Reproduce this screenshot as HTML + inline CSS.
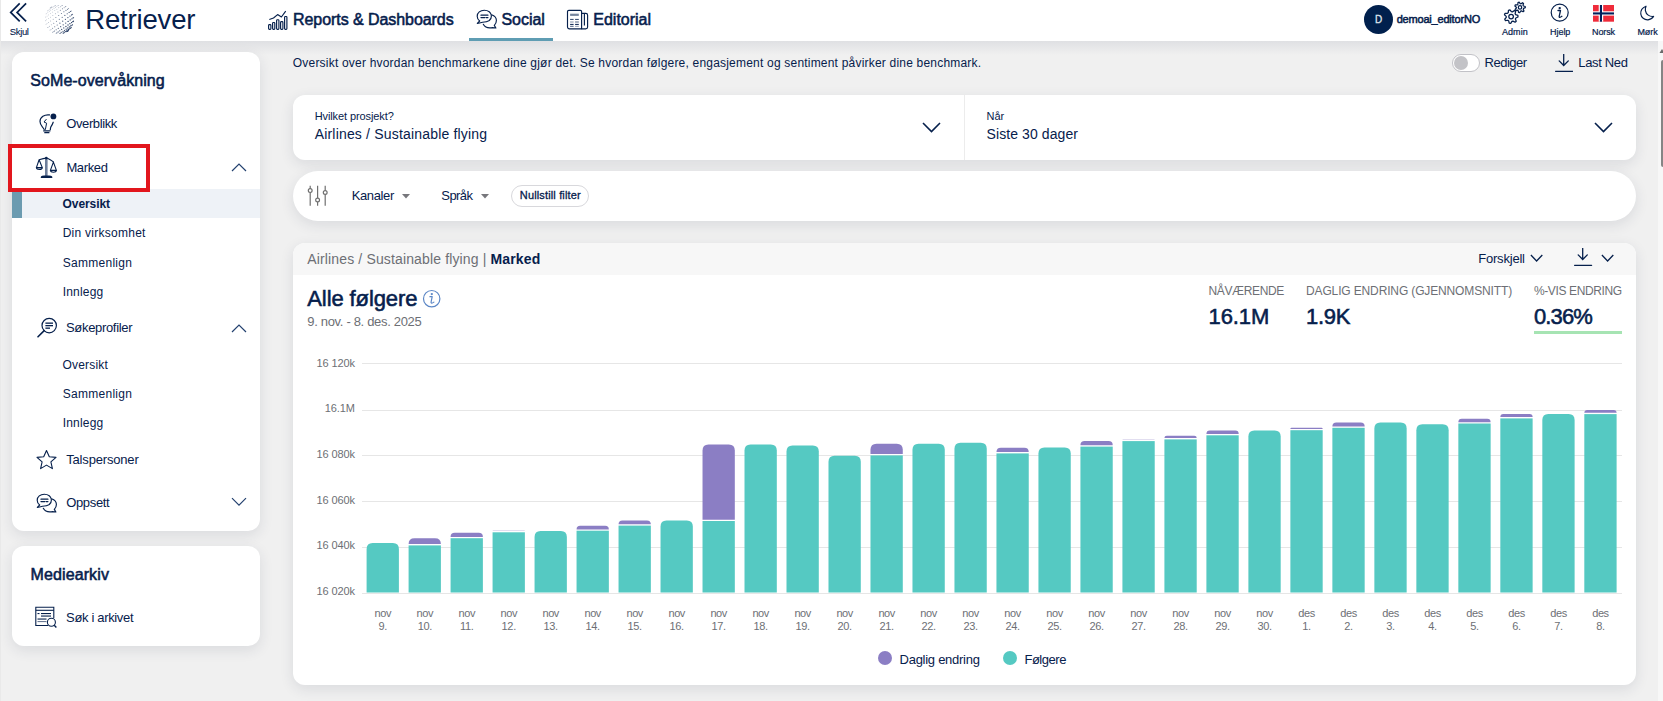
<!DOCTYPE html><html><head><meta charset="utf-8"><style>
html,body{margin:0;padding:0;width:1663px;height:701px;overflow:hidden;background:#f0f0f0;}
body{position:relative;font-family:"Liberation Sans",sans-serif;}
.t{position:absolute;white-space:nowrap;}
</style></head><body>
<div style="position:absolute;left:0px;top:41px;width:1663px;height:660px;background:#f0f0f0;"></div>
<div style="position:absolute;left:0px;top:41px;width:1px;height:660px;background:#e6e6e7;"></div>
<div style="position:absolute;left:0px;top:41px;width:1658px;height:14px;background:linear-gradient(#dfe0e3,#f0f0f0);"></div>
<div style="position:absolute;left:12px;top:52px;width:248px;height:479px;background:#fff;border-radius:12px;box-shadow:0 4px 14px rgba(35,45,75,0.11);"></div>
<div style="position:absolute;left:12px;top:546px;width:248px;height:100px;background:#fff;border-radius:12px;box-shadow:0 4px 14px rgba(35,45,75,0.11);"></div>
<div style="position:absolute;left:293px;top:95px;width:1343px;height:65px;background:#fff;border-radius:12px;box-shadow:0 4px 14px rgba(35,45,75,0.11);"></div>
<div style="position:absolute;left:293px;top:171px;width:1343px;height:50px;background:#fff;border-radius:25px;box-shadow:0 4px 14px rgba(35,45,75,0.11);"></div>
<div style="position:absolute;left:293px;top:243px;width:1343px;height:442px;background:#fff;border-radius:12px;box-shadow:0 4px 14px rgba(35,45,75,0.11);"></div>
<div style="position:absolute;left:0px;top:0px;width:1663px;height:41px;background:#fff;"></div>
<div style="position:absolute;left:0px;top:0px;width:1px;height:701px;background:#e9e9e9;"></div>
<svg style="position:absolute;left:8px;top:2px;" width="22" height="22" viewBox="0 0 22 22"><path d="M11.7 1.4 L2.7 10.4 L11.7 19.4 M18.1 1.4 L9.1 10.4 L18.1 19.4" fill="none" stroke="#06204c" stroke-width="1.7"/></svg>
<div class="t " style="left:9.80px;top:27.00px;font-size:9.5px;line-height:9.5px;color:#06204c;-webkit-text-stroke:0.1px #06204c;letter-spacing:-0.358px;">Skjul</div>
<svg style="position:absolute;left:45px;top:5px;" width="30" height="30" viewBox="0 0 30 30"><circle cx="5.03" cy="3.10" r="0.33" fill="#06204c" opacity="0.40"/><circle cx="5.32" cy="2.90" r="0.33" fill="#06204c" opacity="0.40"/><circle cx="5.64" cy="2.67" r="0.33" fill="#06204c" opacity="0.40"/><circle cx="5.99" cy="2.43" r="0.33" fill="#06204c" opacity="0.41"/><circle cx="6.33" cy="2.19" r="0.33" fill="#06204c" opacity="0.41"/><circle cx="6.66" cy="1.96" r="0.33" fill="#06204c" opacity="0.41"/><circle cx="6.94" cy="1.76" r="0.33" fill="#06204c" opacity="0.42"/><circle cx="2.35" cy="6.00" r="0.32" fill="#06204c" opacity="0.37"/><circle cx="2.71" cy="5.75" r="0.33" fill="#06204c" opacity="0.38"/><circle cx="3.30" cy="5.34" r="0.33" fill="#06204c" opacity="0.38"/><circle cx="4.06" cy="4.80" r="0.34" fill="#06204c" opacity="0.39"/><circle cx="4.97" cy="4.17" r="0.35" fill="#06204c" opacity="0.40"/><circle cx="5.96" cy="3.48" r="0.35" fill="#06204c" opacity="0.42"/><circle cx="6.98" cy="2.76" r="0.36" fill="#06204c" opacity="0.43"/><circle cx="7.97" cy="2.06" r="0.36" fill="#06204c" opacity="0.44"/><circle cx="8.88" cy="1.43" r="0.37" fill="#06204c" opacity="0.45"/><circle cx="9.64" cy="0.89" r="0.36" fill="#06204c" opacity="0.46"/><circle cx="10.23" cy="0.49" r="0.36" fill="#06204c" opacity="0.47"/><circle cx="10.59" cy="0.23" r="0.35" fill="#06204c" opacity="0.47"/><circle cx="1.06" cy="8.91" r="0.33" fill="#06204c" opacity="0.38"/><circle cx="1.82" cy="8.37" r="0.34" fill="#06204c" opacity="0.38"/><circle cx="2.90" cy="7.61" r="0.35" fill="#06204c" opacity="0.40"/><circle cx="4.25" cy="6.67" r="0.36" fill="#06204c" opacity="0.41"/><circle cx="5.78" cy="5.60" r="0.37" fill="#06204c" opacity="0.43"/><circle cx="7.41" cy="4.46" r="0.39" fill="#06204c" opacity="0.45"/><circle cx="9.03" cy="3.32" r="0.40" fill="#06204c" opacity="0.47"/><circle cx="10.57" cy="2.25" r="0.40" fill="#06204c" opacity="0.49"/><circle cx="11.91" cy="1.30" r="0.40" fill="#06204c" opacity="0.50"/><circle cx="13.00" cy="0.54" r="0.40" fill="#06204c" opacity="0.52"/><circle cx="13.76" cy="0.01" r="0.39" fill="#06204c" opacity="0.53"/><circle cx="0.06" cy="12.46" r="0.33" fill="#06204c" opacity="0.39"/><circle cx="0.82" cy="11.92" r="0.35" fill="#06204c" opacity="0.40"/><circle cx="2.05" cy="11.06" r="0.36" fill="#06204c" opacity="0.41"/><circle cx="3.66" cy="9.93" r="0.38" fill="#06204c" opacity="0.43"/><circle cx="5.57" cy="8.59" r="0.40" fill="#06204c" opacity="0.46"/><circle cx="7.67" cy="7.12" r="0.41" fill="#06204c" opacity="0.48"/><circle cx="9.83" cy="5.61" r="0.43" fill="#06204c" opacity="0.51"/><circle cx="11.92" cy="4.15" r="0.44" fill="#06204c" opacity="0.53"/><circle cx="13.83" cy="2.81" r="0.45" fill="#06204c" opacity="0.55"/><circle cx="15.45" cy="1.68" r="0.45" fill="#06204c" opacity="0.57"/><circle cx="16.67" cy="0.82" r="0.43" fill="#06204c" opacity="0.59"/><circle cx="17.44" cy="0.28" r="0.41" fill="#06204c" opacity="0.60"/><circle cx="-0.10" cy="16.10" r="0.34" fill="#06204c" opacity="0.42"/><circle cx="0.51" cy="15.68" r="0.36" fill="#06204c" opacity="0.43"/><circle cx="1.69" cy="14.84" r="0.38" fill="#06204c" opacity="0.44"/><circle cx="3.39" cy="13.66" r="0.40" fill="#06204c" opacity="0.46"/><circle cx="5.49" cy="12.19" r="0.42" fill="#06204c" opacity="0.49"/><circle cx="7.87" cy="10.52" r="0.44" fill="#06204c" opacity="0.51"/><circle cx="10.41" cy="8.74" r="0.47" fill="#06204c" opacity="0.54"/><circle cx="12.94" cy="6.97" r="0.48" fill="#06204c" opacity="0.57"/><circle cx="15.33" cy="5.30" r="0.50" fill="#06204c" opacity="0.60"/><circle cx="17.43" cy="3.83" r="0.50" fill="#06204c" opacity="0.63"/><circle cx="19.12" cy="2.64" r="0.49" fill="#06204c" opacity="0.65"/><circle cx="20.31" cy="1.81" r="0.46" fill="#06204c" opacity="0.66"/><circle cx="20.92" cy="1.38" r="0.41" fill="#06204c" opacity="0.67"/><circle cx="1.02" cy="19.33" r="0.37" fill="#06204c" opacity="0.47"/><circle cx="2.01" cy="18.64" r="0.39" fill="#06204c" opacity="0.48"/><circle cx="3.60" cy="17.52" r="0.42" fill="#06204c" opacity="0.50"/><circle cx="5.70" cy="16.06" r="0.45" fill="#06204c" opacity="0.53"/><circle cx="8.18" cy="14.32" r="0.48" fill="#06204c" opacity="0.56"/><circle cx="10.90" cy="12.42" r="0.50" fill="#06204c" opacity="0.59"/><circle cx="13.70" cy="10.46" r="0.53" fill="#06204c" opacity="0.62"/><circle cx="16.41" cy="8.55" r="0.54" fill="#06204c" opacity="0.65"/><circle cx="18.89" cy="6.82" r="0.55" fill="#06204c" opacity="0.68"/><circle cx="20.99" cy="5.35" r="0.54" fill="#06204c" opacity="0.71"/><circle cx="22.58" cy="4.24" r="0.52" fill="#06204c" opacity="0.73"/><circle cx="23.57" cy="3.54" r="0.47" fill="#06204c" opacity="0.74"/><circle cx="2.43" cy="22.61" r="0.37" fill="#06204c" opacity="0.53"/><circle cx="3.12" cy="22.13" r="0.41" fill="#06204c" opacity="0.53"/><circle cx="4.46" cy="21.19" r="0.44" fill="#06204c" opacity="0.55"/><circle cx="6.37" cy="19.85" r="0.47" fill="#06204c" opacity="0.57"/><circle cx="8.74" cy="18.19" r="0.50" fill="#06204c" opacity="0.60"/><circle cx="11.44" cy="16.30" r="0.53" fill="#06204c" opacity="0.63"/><circle cx="14.30" cy="14.30" r="0.56" fill="#06204c" opacity="0.67"/><circle cx="17.16" cy="12.30" r="0.58" fill="#06204c" opacity="0.70"/><circle cx="19.86" cy="10.41" r="0.59" fill="#06204c" opacity="0.73"/><circle cx="22.23" cy="8.75" r="0.59" fill="#06204c" opacity="0.76"/><circle cx="24.14" cy="7.41" r="0.58" fill="#06204c" opacity="0.78"/><circle cx="25.48" cy="6.47" r="0.54" fill="#06204c" opacity="0.80"/><circle cx="26.17" cy="5.99" r="0.46" fill="#06204c" opacity="0.81"/><circle cx="5.03" cy="25.06" r="0.42" fill="#06204c" opacity="0.60"/><circle cx="6.02" cy="24.36" r="0.46" fill="#06204c" opacity="0.61"/><circle cx="7.61" cy="23.25" r="0.50" fill="#06204c" opacity="0.63"/><circle cx="9.71" cy="21.78" r="0.53" fill="#06204c" opacity="0.65"/><circle cx="12.19" cy="20.05" r="0.56" fill="#06204c" opacity="0.68"/><circle cx="14.90" cy="18.14" r="0.59" fill="#06204c" opacity="0.71"/><circle cx="17.70" cy="16.18" r="0.61" fill="#06204c" opacity="0.75"/><circle cx="20.42" cy="14.28" r="0.63" fill="#06204c" opacity="0.78"/><circle cx="22.90" cy="12.54" r="0.63" fill="#06204c" opacity="0.81"/><circle cx="25.00" cy="11.08" r="0.62" fill="#06204c" opacity="0.83"/><circle cx="26.59" cy="9.96" r="0.59" fill="#06204c" opacity="0.85"/><circle cx="27.58" cy="9.27" r="0.52" fill="#06204c" opacity="0.86"/><circle cx="7.68" cy="27.22" r="0.41" fill="#06204c" opacity="0.66"/><circle cx="8.29" cy="26.79" r="0.47" fill="#06204c" opacity="0.67"/><circle cx="9.48" cy="25.96" r="0.51" fill="#06204c" opacity="0.69"/><circle cx="11.17" cy="24.77" r="0.55" fill="#06204c" opacity="0.71"/><circle cx="13.27" cy="23.30" r="0.58" fill="#06204c" opacity="0.73"/><circle cx="15.66" cy="21.63" r="0.61" fill="#06204c" opacity="0.76"/><circle cx="18.19" cy="19.86" r="0.63" fill="#06204c" opacity="0.79"/><circle cx="20.73" cy="18.08" r="0.65" fill="#06204c" opacity="0.82"/><circle cx="23.11" cy="16.41" r="0.65" fill="#06204c" opacity="0.85"/><circle cx="25.21" cy="14.94" r="0.65" fill="#06204c" opacity="0.87"/><circle cx="26.91" cy="13.76" r="0.62" fill="#06204c" opacity="0.89"/><circle cx="28.09" cy="12.92" r="0.57" fill="#06204c" opacity="0.91"/><circle cx="28.70" cy="12.50" r="0.48" fill="#06204c" opacity="0.91"/><circle cx="11.16" cy="28.32" r="0.46" fill="#06204c" opacity="0.74"/><circle cx="11.93" cy="27.78" r="0.51" fill="#06204c" opacity="0.75"/><circle cx="13.15" cy="26.92" r="0.55" fill="#06204c" opacity="0.76"/><circle cx="14.77" cy="25.79" r="0.58" fill="#06204c" opacity="0.78"/><circle cx="16.68" cy="24.45" r="0.61" fill="#06204c" opacity="0.80"/><circle cx="18.77" cy="22.99" r="0.63" fill="#06204c" opacity="0.83"/><circle cx="20.93" cy="21.48" r="0.65" fill="#06204c" opacity="0.85"/><circle cx="23.03" cy="20.01" r="0.66" fill="#06204c" opacity="0.88"/><circle cx="24.94" cy="18.67" r="0.65" fill="#06204c" opacity="0.90"/><circle cx="26.55" cy="17.54" r="0.63" fill="#06204c" opacity="0.92"/><circle cx="27.78" cy="16.68" r="0.60" fill="#06204c" opacity="0.93"/><circle cx="28.54" cy="16.14" r="0.53" fill="#06204c" opacity="0.94"/><circle cx="14.84" cy="28.59" r="0.49" fill="#06204c" opacity="0.81"/><circle cx="15.60" cy="28.06" r="0.53" fill="#06204c" opacity="0.82"/><circle cx="16.69" cy="27.30" r="0.57" fill="#06204c" opacity="0.83"/><circle cx="18.03" cy="26.35" r="0.60" fill="#06204c" opacity="0.84"/><circle cx="19.57" cy="25.28" r="0.62" fill="#06204c" opacity="0.86"/><circle cx="21.19" cy="24.14" r="0.63" fill="#06204c" opacity="0.88"/><circle cx="22.82" cy="23.00" r="0.64" fill="#06204c" opacity="0.90"/><circle cx="24.35" cy="21.93" r="0.64" fill="#06204c" opacity="0.92"/><circle cx="25.70" cy="20.99" r="0.62" fill="#06204c" opacity="0.94"/><circle cx="26.78" cy="20.23" r="0.59" fill="#06204c" opacity="0.95"/><circle cx="27.54" cy="19.69" r="0.55" fill="#06204c" opacity="0.96"/><circle cx="18.01" cy="28.37" r="0.45" fill="#06204c" opacity="0.86"/><circle cx="18.37" cy="28.11" r="0.50" fill="#06204c" opacity="0.87"/><circle cx="18.96" cy="27.71" r="0.53" fill="#06204c" opacity="0.87"/><circle cx="19.72" cy="27.17" r="0.55" fill="#06204c" opacity="0.88"/><circle cx="20.63" cy="26.54" r="0.57" fill="#06204c" opacity="0.89"/><circle cx="21.62" cy="25.84" r="0.58" fill="#06204c" opacity="0.91"/><circle cx="22.64" cy="25.12" r="0.59" fill="#06204c" opacity="0.92"/><circle cx="23.63" cy="24.43" r="0.59" fill="#06204c" opacity="0.93"/><circle cx="24.54" cy="23.80" r="0.58" fill="#06204c" opacity="0.94"/><circle cx="25.30" cy="23.26" r="0.56" fill="#06204c" opacity="0.95"/><circle cx="25.89" cy="22.85" r="0.53" fill="#06204c" opacity="0.96"/><circle cx="26.25" cy="22.60" r="0.48" fill="#06204c" opacity="0.96"/><circle cx="21.66" cy="26.84" r="0.47" fill="#06204c" opacity="0.92"/><circle cx="21.94" cy="26.64" r="0.48" fill="#06204c" opacity="0.92"/><circle cx="22.27" cy="26.41" r="0.49" fill="#06204c" opacity="0.92"/><circle cx="22.61" cy="26.17" r="0.49" fill="#06204c" opacity="0.93"/><circle cx="22.96" cy="25.93" r="0.49" fill="#06204c" opacity="0.93"/><circle cx="23.28" cy="25.70" r="0.49" fill="#06204c" opacity="0.93"/><circle cx="23.57" cy="25.50" r="0.47" fill="#06204c" opacity="0.94"/></svg>
<div class="t " style="left:85.30px;top:6.00px;font-size:27.5px;line-height:27.5px;color:#06204c;letter-spacing:-0.174px;">Retriever</div>
<svg style="position:absolute;left:267px;top:10px;" width="22" height="21" viewBox="0 0 22 21"><g fill="none" stroke="#06204c" stroke-width="1.15" stroke-linejoin="round"><path d="M2.3 9.5 L6.5 8 L10.6 4.6 L14.4 7 L18.7 1.2"/><rect x="1.6" y="14.6" width="2.3" height="4.7" rx="0.8"/><rect x="5.6" y="12.5" width="2.2" height="6.8" rx="0.8"/><rect x="9.6" y="9.7" width="2.3" height="9.6" rx="0.8"/><rect x="13.6" y="11.6" width="2.3" height="7.7" rx="0.8"/><rect x="17.6" y="6.5" width="2.3" height="12.8" rx="0.8"/></g></svg>
<div class="t " style="left:293.00px;top:12.00px;font-size:16px;line-height:16px;color:#06204c;-webkit-text-stroke:0.55px #06204c;letter-spacing:-0.063px;">Reports &amp; Dashboards</div>
<svg style="position:absolute;left:476px;top:9px;" width="22" height="21" viewBox="0 0 22 21"><g fill="none" stroke="#06204c" stroke-width="1.15" stroke-linejoin="round" stroke-linecap="round"><path d="M6.5 13.2 C10.5 13.2 15.4 11.8 15.4 7 C15.4 3.2 12 1.2 8.3 1.2 C4.3 1.2 1.2 3.6 1.2 7.2 C1.2 9.2 2.2 10.9 3.7 12 L1.3 14.4 C3 14.3 4.8 13.8 6.5 13.2 Z"/><path d="M15.6 5.8 C18.5 6.8 20.4 9 20.4 11.6 C20.4 13.6 19.6 15.1 18.3 16.4 L19.9 19 C18.7 19 17.5 18.8 16.4 18.6 C15.6 18.8 14.7 18.9 13.8 18.9 C10.8 18.9 8.5 17.5 7.3 15.3"/><path d="M5 6.2 H11.9 M5 8.6 H8.8 M10.2 8.6 H11.9" stroke-width="1.3"/></g></svg>
<div class="t " style="left:501.50px;top:12.00px;font-size:16px;line-height:16px;color:#06204c;-webkit-text-stroke:0.55px #06204c;letter-spacing:-0.047px;">Social</div>
<div style="position:absolute;left:469px;top:38px;width:84px;height:3px;background:#5f9db3;"></div>
<svg style="position:absolute;left:566px;top:9px;" width="23" height="22" viewBox="0 0 23 22"><g fill="none" stroke="#06204c" stroke-width="1.15" stroke-linejoin="round"><path d="M15.6 19.9 H3.5 C2.3 19.9 1.5 19 1.5 17.8 V2.6 C1.5 1.8 2 1.3 2.8 1.3 H14.4 C15.1 1.3 15.6 1.8 15.6 2.6 Z"/><path d="M15.6 4.4 H19.8 C20.8 4.4 21.6 5.2 21.6 6.2 V18 C21.6 19.1 20.8 19.9 19.7 19.9 H15.6"/><path d="M18.4 4.9 V16.5"/></g><g fill="#06204c"><rect x="4.1" y="4.7" width="8.7" height="2.2" opacity="0.55"/><rect x="4.1" y="9.9" width="3.5" height="1" opacity="0.85"/><rect x="9.1" y="9.9" width="3.7" height="1" opacity="0.85"/><rect x="4.1" y="12.5" width="3.5" height="1" opacity="0.5"/><rect x="9.1" y="12.5" width="3.7" height="1" opacity="0.7"/><rect x="4.1" y="14.9" width="3.5" height="1" opacity="1"/><rect x="9.1" y="14.9" width="3.7" height="1" opacity="1"/><rect x="4.1" y="16.8" width="3.5" height="1" opacity="0.7"/><rect x="9.1" y="16.8" width="3.7" height="1" opacity="0.45"/></g></svg>
<div class="t " style="left:593.30px;top:12.00px;font-size:16px;line-height:16px;color:#06204c;-webkit-text-stroke:0.55px #06204c;letter-spacing:-0.012px;">Editorial</div>
<div style="position:absolute;left:1363.9px;top:4.9px;width:29px;height:29px;border-radius:50%;background:#00204d;"></div>
<div class="t " style="left:1374.90px;top:15.00px;font-size:10px;line-height:10px;color:#dfe4ec;-webkit-text-stroke:0.3px #dfe4ec;letter-spacing:-0.222px;">D</div>
<div class="t " style="left:1396.70px;top:14.00px;font-size:11px;line-height:11px;color:#06204c;-webkit-text-stroke:0.5px #06204c;letter-spacing:-0.194px;">demoai_editorNO</div>
<svg style="position:absolute;left:1502px;top:1px;" width="26" height="24" viewBox="0 0 26 24"><path d="M15.90 14.44 L15.99 15.99 L13.81 16.96 L13.39 17.97 L14.24 20.20 L13.09 21.23 L10.98 20.13 L9.92 20.43 L8.71 22.49 L7.19 22.23 L6.73 19.89 L5.83 19.25 L3.47 19.59 L2.73 18.24 L4.27 16.42 L4.21 15.33 L2.47 13.69 L3.06 12.26 L5.45 12.33 L6.26 11.60 L6.46 9.23 L7.94 8.80 L9.37 10.71 L10.46 10.89 L12.44 9.56 L13.70 10.46 L13.10 12.76 L13.63 13.72Z" fill="none" stroke="#06204c" stroke-width="1.25" stroke-linejoin="round"/><circle cx="9.1" cy="15.6" r="2.3" fill="none" stroke="#06204c" stroke-width="1.25"/><path d="M23.23 5.51 L23.29 6.70 L21.56 7.42 L21.24 8.19 L21.95 9.93 L21.07 10.72 L19.42 9.82 L18.62 10.05 L17.70 11.69 L16.53 11.49 L16.21 9.64 L15.53 9.16 L13.68 9.47 L13.10 8.43 L14.35 7.02 L14.31 6.19 L12.91 4.93 L13.36 3.84 L15.24 3.93 L15.86 3.38 L15.97 1.50 L17.11 1.17 L18.21 2.71 L19.02 2.84 L20.56 1.76 L21.53 2.45 L21.02 4.26 L21.42 4.98Z" fill="none" stroke="#06204c" stroke-width="1.25" stroke-linejoin="round"/><circle cx="18" cy="6.4" r="1.7" fill="none" stroke="#06204c" stroke-width="1.25"/></svg>
<div class="t " style="left:1502.00px;top:28.00px;font-size:9px;line-height:9px;color:#06204c;-webkit-text-stroke:0.2px #06204c;letter-spacing:0.058px;">Admin</div>
<svg style="position:absolute;left:1550px;top:3px;" width="20" height="20" viewBox="0 0 20 20"><circle cx="9.7" cy="9.6" r="8.5" fill="none" stroke="#06204c" stroke-width="1.2"/><circle cx="9.7" cy="5.1" r="1.2" fill="#06204c"/><path d="M8 7.5 H10.5 L9.2 13.3 C9 14.6 10.2 14.7 11.9 13.3" fill="none" stroke="#06204c" stroke-width="1.3" stroke-linecap="round" stroke-linejoin="round"/></svg>
<div class="t " style="left:1550.00px;top:28.00px;font-size:9px;line-height:9px;color:#06204c;-webkit-text-stroke:0.2px #06204c;letter-spacing:-0.042px;">Hjelp</div>
<svg style="position:absolute;left:1593px;top:5.1px;" width="21" height="16.7" viewBox="0 0 21 16.7"><rect width="21" height="16.7" fill="#ef2b3a"/><rect x="5.7" width="4.5" height="16.7" fill="#fff"/><rect y="6.3" width="21" height="4.3" fill="#fff"/><rect x="6.9" width="2.1" height="16.7" fill="#00205b"/><rect y="7.4" width="21" height="2.1" fill="#00205b"/></svg>
<div class="t " style="left:1592.00px;top:28.00px;font-size:9px;line-height:9px;color:#06204c;-webkit-text-stroke:0.2px #06204c;letter-spacing:-0.101px;">Norsk</div>
<svg style="position:absolute;left:1639px;top:5px;" width="17" height="16" viewBox="0 0 17 16"><path d="M7 1.2 C3.5 2.5 1.5 5.5 1.8 9 C2.2 12.6 5.3 15 9 14.8 C11.5 14.6 13.4 13.3 14.6 11.4 C10.5 12 7 9.3 6.4 5.6 C6.2 4 6.4 2.5 7 1.2 Z" fill="none" stroke="#06204c" stroke-width="1.2" stroke-linejoin="round"/></svg>
<div class="t " style="left:1637.40px;top:28.00px;font-size:9px;line-height:9px;color:#06204c;-webkit-text-stroke:0.2px #06204c;letter-spacing:-0.073px;">Mørk</div>
<div style="position:absolute;left:1658px;top:41px;width:5px;height:660px;background:#f7f7f7;"></div>
<div style="position:absolute;left:1661px;top:60px;width:4px;height:107px;background:#858585;border-radius:2px;"></div>
<svg style="position:absolute;left:1659px;top:48px;" width="6" height="6" viewBox="0 0 6 6"><path d="M0.5 5 L3 1 L5.5 5 Z" fill="#6a6a6a"/></svg>
<div class="t " style="left:30.30px;top:73.00px;font-size:16px;line-height:16px;color:#06204c;-webkit-text-stroke:0.55px #06204c;letter-spacing:0.062px;">SoMe-overvåkning</div>
<svg style="position:absolute;left:38px;top:112px;" width="21" height="23" viewBox="0 0 21 23"><g fill="none" stroke="#06204c" stroke-width="1.2" stroke-linecap="round"><path d="M11.5 2.9 C6.5 2.2 2 5.2 2 9.5 C2 12.3 3.6 14 4.8 15.5 C5.6 16.5 6 17 6.2 17.6"/><path d="M15.2 10.2 C14.6 12 13.8 13.3 13 14.6 C12.6 15.4 12.4 16.4 12.3 17.6"/><path d="M8.2 7.4 L6 10 L8.6 11.2 L7.4 17.4" stroke-width="1"/></g><g fill="#06204c"><rect x="5.1" y="18.2" width="7.4" height="1.3" rx="0.5"/><rect x="6.2" y="19.9" width="5.3" height="1.3" rx="0.5"/></g><circle cx="15.4" cy="4.4" r="2.9" fill="#06204c"/></svg>
<div class="t " style="left:66.20px;top:117.00px;font-size:13px;line-height:13px;color:#06204c;letter-spacing:-0.375px;">Overblikk</div>
<div style="position:absolute;left:12px;top:189px;width:248px;height:29px;background:#eef2f7;"></div>
<div style="position:absolute;left:12px;top:189px;width:10px;height:29px;background:#6b9bb0;"></div>
<svg style="position:absolute;left:35px;top:156px;" width="23" height="23" viewBox="0 0 23 23"><g fill="none" stroke="#06204c" stroke-width="1.1" stroke-linejoin="round"><path d="M4.1 3.7 C7 2.7 9.5 2.1 11.3 2.1 C13.5 2.2 16.3 4.4 18.6 6"/><path d="M4.1 3.8 L1.4 11.6 H7.3 Z M18.4 6.1 L15.4 14.4 H21.4 Z"/><path d="M1.4 11.6 C1.8 14 7 14 7.3 11.6 M15.4 14.4 C15.8 16.8 21 16.8 21.4 14.4"/></g><path d="M10 2.6 H12.6 V20 H10 Z" fill="#6f7f9a"/><circle cx="11.3" cy="2.1" r="1.3" fill="#06204c"/><path d="M5.8 20.9 C5.8 19.9 7.8 19.6 11.5 19.6 C15.2 19.6 17.3 19.9 17.3 20.9 V22 H5.8 Z" fill="#06204c"/></svg>
<div class="t " style="left:66.40px;top:161.00px;font-size:13px;line-height:13px;color:#06204c;letter-spacing:-0.358px;">Marked</div>
<svg style="position:absolute;left:231px;top:163px;" width="16" height="10" viewBox="0 0 16 10"><path d="M1 8 L8 1 L15 8" fill="none" stroke="#23416f" stroke-width="1.2"/></svg>
<div class="t " style="left:62.50px;top:198.00px;font-size:12px;line-height:12px;color:#06204c;font-weight:700;letter-spacing:-0.066px;">Oversikt</div>
<div class="t " style="left:62.70px;top:227.00px;font-size:12px;line-height:12px;color:#06204c;letter-spacing:0.260px;">Din virksomhet</div>
<div class="t " style="left:62.70px;top:257.00px;font-size:12px;line-height:12px;color:#06204c;letter-spacing:0.280px;">Sammenlign</div>
<div class="t " style="left:62.70px;top:286.00px;font-size:12px;line-height:12px;color:#06204c;letter-spacing:0.204px;">Innlegg</div>
<svg style="position:absolute;left:36.8px;top:317.2px;" width="22" height="21" viewBox="0 0 22 21"><g fill="none" stroke="#06204c" stroke-width="1.2"><circle cx="12.2" cy="8.6" r="7.2"/><path d="M7.2 13.6 L1 19.8" stroke-width="1.6" stroke-linecap="round"/></g><g fill="#06204c"><rect x="8.4" y="5.5" width="7.6" height="1.3"/><rect x="8.4" y="8" width="7.6" height="1.3"/><rect x="8.4" y="10.5" width="4.6" height="1.3"/></g></svg>
<div class="t " style="left:66.00px;top:321.00px;font-size:13px;line-height:13px;color:#06204c;letter-spacing:-0.323px;">Søkeprofiler</div>
<svg style="position:absolute;left:231px;top:323.8px;" width="16" height="10" viewBox="0 0 16 10"><path d="M1 8 L8 1 L15 8" fill="none" stroke="#23416f" stroke-width="1.2"/></svg>
<div class="t " style="left:62.50px;top:359.00px;font-size:12px;line-height:12px;color:#06204c;letter-spacing:0.187px;">Oversikt</div>
<div class="t " style="left:62.70px;top:388.00px;font-size:12px;line-height:12px;color:#06204c;letter-spacing:0.280px;">Sammenlign</div>
<div class="t " style="left:62.70px;top:417.00px;font-size:12px;line-height:12px;color:#06204c;letter-spacing:0.204px;">Innlegg</div>
<svg style="position:absolute;left:35px;top:449px;" width="23" height="22" viewBox="0 0 23 22"><path d="M11.5 1.6 L14.3 7.8 L21 8.4 L15.9 12.9 L17.4 19.6 L11.5 16.1 L5.6 19.6 L7.1 12.9 L2 8.4 L8.7 7.8 Z" fill="none" stroke="#06204c" stroke-width="1.1" stroke-linejoin="round"/></svg>
<div class="t " style="left:66.20px;top:453.00px;font-size:13px;line-height:13px;color:#06204c;letter-spacing:-0.169px;">Talspersoner</div>
<svg style="position:absolute;left:35.8px;top:492.8px;" width="23" height="21" viewBox="0 0 23 21"><g fill="none" stroke="#06204c" stroke-width="1.15" stroke-linejoin="round" stroke-linecap="round"><path d="M6.5 13.2 C10.5 13.2 15.4 11.8 15.4 7 C15.4 3.2 12 1.2 8.3 1.2 C4.3 1.2 1.2 3.6 1.2 7.2 C1.2 9.2 2.2 10.9 3.7 12 L1.3 14.4 C3 14.3 4.8 13.8 6.5 13.2 Z"/><path d="M15.6 5.8 C18.5 6.8 20.4 9 20.4 11.6 C20.4 13.6 19.6 15.1 18.3 16.4 L19.9 19 C18.7 19 17.5 18.8 16.4 18.6 C15.6 18.8 14.7 18.9 13.8 18.9 C10.8 18.9 8.5 17.5 7.3 15.3"/><path d="M5 6.2 H11.9 M5 8.6 H8.8 M10.2 8.6 H11.9" stroke-width="1.3"/></g></svg>
<div class="t " style="left:66.20px;top:496.00px;font-size:13px;line-height:13px;color:#06204c;letter-spacing:-0.332px;">Oppsett</div>
<svg style="position:absolute;left:231px;top:497px;" width="16" height="10" viewBox="0 0 16 10"><path d="M1 1.2 L8 8.2 L15 1.2" fill="none" stroke="#23416f" stroke-width="1.2"/></svg>
<div class="t " style="left:30.50px;top:567.00px;font-size:16px;line-height:16px;color:#06204c;-webkit-text-stroke:0.55px #06204c;letter-spacing:0.114px;">Mediearkiv</div>
<svg style="position:absolute;left:34px;top:606px;" width="24" height="23" viewBox="0 0 24 23"><g fill="none" stroke="#06204c" stroke-width="1.1"><path d="M14 19.5 H1.8 V1.3 H19.8 V12"/><path d="M1.8 4.3 H19.8"/><circle cx="17.4" cy="16.3" r="4"/><path d="M20.2 19.3 L22.4 21.6" stroke-width="1.4"/></g><g fill="#06204c"><rect x="7" y="7" width="10" height="1.1"/><rect x="7" y="9.5" width="10" height="1.1"/><rect x="3.5" y="7" width="2" height="1.1"/><rect x="3.5" y="12.5" width="9" height="1.1"/><rect x="3.5" y="15" width="9" height="1.1" opacity="0.6"/></g></svg>
<div class="t " style="left:66.10px;top:611.00px;font-size:13px;line-height:13px;color:#06204c;letter-spacing:-0.340px;">Søk i arkivet</div>
<div style="position:absolute;left:8px;top:144.4px;width:142px;height:47.6px;border:4px solid #e2161d;box-sizing:border-box;"></div>
<div class="t " style="left:292.80px;top:57.00px;font-size:12px;line-height:12px;color:#06204c;letter-spacing:0.203px;">Oversikt over hvordan benchmarkene dine gjør det. Se hvordan følgere, engasjement og sentiment påvirker dine benchmark.</div>
<div style="position:absolute;left:1452px;top:54px;width:28.3px;height:17.6px;border-radius:9px;background:#fff;border:1px solid #c2c2c7;box-sizing:border-box;"></div>
<div style="position:absolute;left:1453.6px;top:55.8px;width:14px;height:14px;border-radius:50%;background:#c3c3c7;"></div>
<div class="t " style="left:1484.50px;top:56.00px;font-size:13px;line-height:13px;color:#06204c;letter-spacing:-0.490px;">Rediger</div>
<svg style="position:absolute;left:1555px;top:54px;" width="18" height="18" viewBox="0 0 18 18"><g fill="none" stroke="#06204c" stroke-width="1.3" stroke-linecap="round"><path d="M8.7 0.3 V11.4 M4.2 6.9 L8.7 11.5 L13.3 6.9"/><path d="M0.6 17.3 H17.6"/></g></svg>
<div class="t " style="left:1578.30px;top:56.00px;font-size:13px;line-height:13px;color:#06204c;letter-spacing:-0.342px;">Last Ned</div>
<div style="position:absolute;left:964px;top:95px;width:1px;height:65px;background:#ececec;"></div>
<div class="t " style="left:314.70px;top:111.00px;font-size:11px;line-height:11px;color:#06204c;letter-spacing:-0.100px;">Hvilket prosjekt?</div>
<div class="t " style="left:314.70px;top:127.00px;font-size:14px;line-height:14px;color:#06204c;letter-spacing:0.182px;">Airlines / Sustainable flying</div>
<svg style="position:absolute;left:922px;top:122px;" width="19" height="11" viewBox="0 0 19 11"><path d="M1 1 L9.5 9.5 L18 1" fill="none" stroke="#06204c" stroke-width="1.6"/></svg>
<div class="t " style="left:986.60px;top:111.00px;font-size:11px;line-height:11px;color:#06204c;letter-spacing:-0.075px;">Når</div>
<div class="t " style="left:986.60px;top:127.00px;font-size:14px;line-height:14px;color:#06204c;letter-spacing:0.080px;">Siste 30 dager</div>
<svg style="position:absolute;left:1594px;top:122px;" width="19" height="11" viewBox="0 0 19 11"><path d="M1 1 L9.5 9.5 L18 1" fill="none" stroke="#06204c" stroke-width="1.6"/></svg>
<svg style="position:absolute;left:307px;top:185px;" width="22" height="22" viewBox="0 0 22 22"><g stroke="#707070" stroke-width="1.2" fill="none"><path d="M3.2 0.8 V20.7 M10.6 0.8 V20.7 M18.2 0.8 V20.7"/><circle cx="3.2" cy="5.6" r="1.9" fill="#fff"/><circle cx="10.6" cy="15" r="1.9" fill="#fff"/><circle cx="18.2" cy="7.5" r="1.9" fill="#fff"/></g></svg>
<div class="t " style="left:351.70px;top:189.00px;font-size:13px;line-height:13px;color:#06204c;letter-spacing:-0.373px;">Kanaler</div>
<svg style="position:absolute;left:401.5px;top:193.5px;" width="8" height="5" viewBox="0 0 8 5"><path d="M0 0 H8 L4 4.6 Z" fill="#77777c"/></svg>
<div class="t " style="left:441.30px;top:189.00px;font-size:13px;line-height:13px;color:#06204c;letter-spacing:-0.552px;">Språk</div>
<svg style="position:absolute;left:480.5px;top:193.5px;" width="8" height="5" viewBox="0 0 8 5"><path d="M0 0 H8 L4 4.6 Z" fill="#77777c"/></svg>
<div style="position:absolute;left:511.3px;top:185px;width:77.7px;height:21.7px;border-radius:11px;border:1px solid #d8d8dc;box-sizing:border-box;"></div>
<div class="t " style="left:519.80px;top:190.00px;font-size:11px;line-height:11px;color:#06204c;-webkit-text-stroke:0.3px #06204c;letter-spacing:0.145px;">Nullstill filter</div>
<div style="position:absolute;left:293px;top:243px;width:1343px;height:32px;background:#f7f7f7;border-radius:12px 12px 0 0;"></div>
<div class="t" style="left:307.3px;top:252.00px;font-size:14px;line-height:14px;color:#6d6f75;letter-spacing:0.14px;white-space:nowrap;">Airlines / Sustainable flying | <b style="color:#06204c;">Marked</b></div>
<div class="t " style="left:1478.20px;top:252.00px;font-size:13px;line-height:13px;color:#06204c;letter-spacing:-0.200px;">Forskjell</div>
<svg style="position:absolute;left:1529.5px;top:254px;" width="14" height="9" viewBox="0 0 14 9"><path d="M0.9 1 L6.6 7 L12.3 1" fill="none" stroke="#06204c" stroke-width="1.3"/></svg>
<svg style="position:absolute;left:1573.5px;top:248px;" width="19" height="18" viewBox="0 0 19 18"><g fill="none" stroke="#06204c" stroke-width="1.3" stroke-linecap="round"><path d="M8.7 0.3 V11.4 M4.2 6.9 L8.7 11.5 L13.3 6.9"/><path d="M0.6 17.3 H17.6"/></g></svg>
<svg style="position:absolute;left:1600.5px;top:254px;" width="14" height="9" viewBox="0 0 14 9"><path d="M0.9 1 L6.6 7 L12.3 1" fill="none" stroke="#06204c" stroke-width="1.3"/></svg>
<div class="t " style="left:307.30px;top:288.00px;font-size:22px;line-height:22px;color:#06204c;-webkit-text-stroke:0.55px #06204c;letter-spacing:-0.106px;">Alle følgere</div>
<svg style="position:absolute;left:422px;top:289px;" width="20" height="20" viewBox="0 0 20 20"><circle cx="9.7" cy="9.7" r="8.2" fill="none" stroke="#5c87c6" stroke-width="1.2"/><circle cx="9.8" cy="5.1" r="1.15" fill="#5c87c6"/><path d="M7.9 7.7 H10.2 L9.1 13 C8.9 14.3 10 14.6 11.9 13.1" fill="none" stroke="#5c87c6" stroke-width="1.2" stroke-linecap="round" stroke-linejoin="round"/></svg>
<div class="t " style="left:307.30px;top:315.00px;font-size:13px;line-height:13px;color:#6d6f75;letter-spacing:-0.321px;">9. nov. - 8. des. 2025</div>
<div class="t " style="left:1208.50px;top:285.00px;font-size:12px;line-height:12px;color:#6d6f75;letter-spacing:-0.354px;">NÅVÆRENDE</div>
<div class="t " style="left:1208.50px;top:306.00px;font-size:22px;line-height:22px;color:#06204c;-webkit-text-stroke:0.55px #06204c;letter-spacing:-0.089px;">16.1M</div>
<div class="t " style="left:1306.00px;top:285.00px;font-size:12px;line-height:12px;color:#6d6f75;letter-spacing:-0.138px;">DAGLIG ENDRING (GJENNOMSNITT)</div>
<div class="t " style="left:1306.00px;top:306.00px;font-size:22px;line-height:22px;color:#06204c;-webkit-text-stroke:0.55px #06204c;letter-spacing:-0.315px;">1.9K</div>
<div class="t " style="left:1533.90px;top:285.00px;font-size:12px;line-height:12px;color:#6d6f75;letter-spacing:-0.368px;">%-VIS ENDRING</div>
<div class="t " style="left:1533.90px;top:306.00px;font-size:22px;line-height:22px;color:#06204c;-webkit-text-stroke:0.55px #06204c;letter-spacing:-0.856px;">0.36%</div>
<div style="position:absolute;left:1534px;top:331px;width:88px;height:3px;background:#a6e4b3;"></div>
<svg style="position:absolute;left:0;top:0" width="1663" height="701"><rect x="362" y="363" width="1260" height="1" fill="#e6e6e6"/><rect x="362" y="410" width="1260" height="1" fill="#e6e6e6"/><rect x="362" y="455" width="1260" height="1" fill="#e6e6e6"/><rect x="362" y="501" width="1260" height="1" fill="#e6e6e6"/><rect x="362" y="547" width="1260" height="1" fill="#e6e6e6"/><rect x="362" y="593" width="1260" height="1" fill="#e6e6e6"/><path d="M366.60 592.50 V548.90 Q366.60 542.90 372.60 542.90 H392.90 Q398.90 542.90 398.90 548.90 V592.50 Z" fill="#55c9c2"/><rect x="408.59" y="545.40" width="32.3" height="47.10" fill="#55c9c2"/><path d="M408.59 544.10 V544.10 Q408.59 538.20 414.49 538.20 H434.99 Q440.89 538.20 440.89 544.10 V544.10 Z" fill="#8b7ec4"/><rect x="450.58" y="538.20" width="32.3" height="54.30" fill="#55c9c2"/><path d="M450.58 536.90 V536.90 Q450.58 532.70 454.78 532.70 H478.68 Q482.88 532.70 482.88 536.90 V536.90 Z" fill="#8b7ec4"/><rect x="492.57" y="532.30" width="32.3" height="60.20" fill="#55c9c2"/><path d="M492.57 531.00 V531.00 Q492.57 530.70 492.87 530.70 H524.57 Q524.87 530.70 524.87 531.00 V531.00 Z" fill="#8b7ec4"/><path d="M534.56 592.50 V537.10 Q534.56 531.10 540.56 531.10 H560.86 Q566.86 531.10 566.86 537.10 V592.50 Z" fill="#55c9c2"/><rect x="576.55" y="530.70" width="32.3" height="61.80" fill="#55c9c2"/><path d="M576.55 529.40 V529.40 Q576.55 525.80 580.15 525.80 H605.25 Q608.85 525.80 608.85 529.40 V529.40 Z" fill="#8b7ec4"/><rect x="618.54" y="525.60" width="32.3" height="66.90" fill="#55c9c2"/><path d="M618.54 524.30 V524.30 Q618.54 520.40 622.44 520.40 H646.94 Q650.84 520.40 650.84 524.30 V524.30 Z" fill="#8b7ec4"/><path d="M660.53 592.50 V526.40 Q660.53 520.40 666.53 520.40 H686.83 Q692.83 520.40 692.83 526.40 V592.50 Z" fill="#55c9c2"/><rect x="702.52" y="521.00" width="32.3" height="71.50" fill="#55c9c2"/><path d="M702.52 519.70 V450.60 Q702.52 444.60 708.52 444.60 H728.82 Q734.82 444.60 734.82 450.60 V519.70 Z" fill="#8b7ec4"/><path d="M744.51 592.50 V450.60 Q744.51 444.60 750.51 444.60 H770.81 Q776.81 444.60 776.81 450.60 V592.50 Z" fill="#55c9c2"/><path d="M786.50 592.50 V451.60 Q786.50 445.60 792.50 445.60 H812.80 Q818.80 445.60 818.80 451.60 V592.50 Z" fill="#55c9c2"/><path d="M828.49 592.50 V461.70 Q828.49 455.70 834.49 455.70 H854.79 Q860.79 455.70 860.79 461.70 V592.50 Z" fill="#55c9c2"/><rect x="870.48" y="455.40" width="32.3" height="137.10" fill="#55c9c2"/><path d="M870.48 454.10 V449.80 Q870.48 443.80 876.48 443.80 H896.78 Q902.78 443.80 902.78 449.80 V454.10 Z" fill="#8b7ec4"/><path d="M912.47 592.50 V449.80 Q912.47 443.80 918.47 443.80 H938.77 Q944.77 443.80 944.77 449.80 V592.50 Z" fill="#55c9c2"/><path d="M954.46 592.50 V448.80 Q954.46 442.80 960.46 442.80 H980.76 Q986.76 442.80 986.76 448.80 V592.50 Z" fill="#55c9c2"/><rect x="996.45" y="453.40" width="32.3" height="139.10" fill="#55c9c2"/><path d="M996.45 452.10 V452.10 Q996.45 447.70 1000.85 447.70 H1024.35 Q1028.75 447.70 1028.75 452.10 V452.10 Z" fill="#8b7ec4"/><path d="M1038.44 592.50 V453.60 Q1038.44 447.60 1044.44 447.60 H1064.74 Q1070.74 447.60 1070.74 453.60 V592.50 Z" fill="#55c9c2"/><rect x="1080.43" y="446.60" width="32.3" height="145.90" fill="#55c9c2"/><path d="M1080.43 445.30 V445.30 Q1080.43 441.10 1084.63 441.10 H1108.53 Q1112.73 441.10 1112.73 445.30 V445.30 Z" fill="#8b7ec4"/><rect x="1122.42" y="441.10" width="32.3" height="151.40" fill="#55c9c2"/><path d="M1122.42 439.80 V439.80 Q1122.42 439.40 1122.82 439.40 H1154.32 Q1154.72 439.40 1154.72 439.80 V439.80 Z" fill="#8b7ec4"/><rect x="1164.41" y="439.40" width="32.3" height="153.10" fill="#55c9c2"/><path d="M1164.41 438.10 V438.10 Q1164.41 435.70 1166.81 435.70 H1194.31 Q1196.71 435.70 1196.71 438.10 V438.10 Z" fill="#8b7ec4"/><rect x="1206.40" y="435.30" width="32.3" height="157.20" fill="#55c9c2"/><path d="M1206.40 434.00 V434.00 Q1206.40 430.60 1209.80 430.60 H1235.30 Q1238.70 430.60 1238.70 434.00 V434.00 Z" fill="#8b7ec4"/><path d="M1248.39 592.50 V436.60 Q1248.39 430.60 1254.39 430.60 H1274.69 Q1280.69 430.60 1280.69 436.60 V592.50 Z" fill="#55c9c2"/><rect x="1290.38" y="430.20" width="32.3" height="162.30" fill="#55c9c2"/><path d="M1290.38 428.90 V428.90 Q1290.38 427.80 1291.48 427.80 H1321.58 Q1322.68 427.80 1322.68 428.90 V428.90 Z" fill="#8b7ec4"/><rect x="1332.37" y="427.80" width="32.3" height="164.70" fill="#55c9c2"/><path d="M1332.37 426.50 V426.50 Q1332.37 422.50 1336.37 422.50 H1360.67 Q1364.67 422.50 1364.67 426.50 V426.50 Z" fill="#8b7ec4"/><path d="M1374.36 592.50 V428.40 Q1374.36 422.40 1380.36 422.40 H1400.66 Q1406.66 422.40 1406.66 428.40 V592.50 Z" fill="#55c9c2"/><path d="M1416.35 592.50 V430.20 Q1416.35 424.20 1422.35 424.20 H1442.65 Q1448.65 424.20 1448.65 430.20 V592.50 Z" fill="#55c9c2"/><rect x="1458.34" y="423.50" width="32.3" height="169.00" fill="#55c9c2"/><path d="M1458.34 422.20 V422.20 Q1458.34 418.80 1461.74 418.80 H1487.24 Q1490.64 418.80 1490.64 422.20 V422.20 Z" fill="#8b7ec4"/><rect x="1500.33" y="418.40" width="32.3" height="174.10" fill="#55c9c2"/><path d="M1500.33 417.10 V417.10 Q1500.33 414.10 1503.33 414.10 H1529.63 Q1532.63 414.10 1532.63 417.10 V417.10 Z" fill="#8b7ec4"/><path d="M1542.32 592.50 V420.10 Q1542.32 414.10 1548.32 414.10 H1568.62 Q1574.62 414.10 1574.62 420.10 V592.50 Z" fill="#55c9c2"/><rect x="1584.31" y="414.10" width="32.3" height="178.40" fill="#55c9c2"/><path d="M1584.31 412.80 V412.80 Q1584.31 409.90 1587.21 409.90 H1613.71 Q1616.61 409.90 1616.61 412.80 V412.80 Z" fill="#8b7ec4"/></svg>
<div class="t " style="left:374.50px;top:608.00px;font-size:11px;line-height:11px;color:#6d6f75;letter-spacing:-0.414px;">nov</div>
<div class="t " style="left:378.48px;top:621.00px;font-size:11px;line-height:11px;color:#6d6f75;letter-spacing:-0.321px;">9.</div>
<div class="t " style="left:416.49px;top:608.00px;font-size:11px;line-height:11px;color:#6d6f75;letter-spacing:-0.414px;">nov</div>
<div class="t " style="left:417.63px;top:621.00px;font-size:11px;line-height:11px;color:#6d6f75;letter-spacing:-0.357px;">10.</div>
<div class="t " style="left:458.48px;top:608.00px;font-size:11px;line-height:11px;color:#6d6f75;letter-spacing:-0.414px;">nov</div>
<div class="t " style="left:460.00px;top:621.00px;font-size:11px;line-height:11px;color:#6d6f75;letter-spacing:-0.338px;">11.</div>
<div class="t " style="left:500.47px;top:608.00px;font-size:11px;line-height:11px;color:#6d6f75;letter-spacing:-0.414px;">nov</div>
<div class="t " style="left:501.61px;top:621.00px;font-size:11px;line-height:11px;color:#6d6f75;letter-spacing:-0.357px;">12.</div>
<div class="t " style="left:542.46px;top:608.00px;font-size:11px;line-height:11px;color:#6d6f75;letter-spacing:-0.414px;">nov</div>
<div class="t " style="left:543.60px;top:621.00px;font-size:11px;line-height:11px;color:#6d6f75;letter-spacing:-0.357px;">13.</div>
<div class="t " style="left:584.45px;top:608.00px;font-size:11px;line-height:11px;color:#6d6f75;letter-spacing:-0.414px;">nov</div>
<div class="t " style="left:585.59px;top:621.00px;font-size:11px;line-height:11px;color:#6d6f75;letter-spacing:-0.357px;">14.</div>
<div class="t " style="left:626.44px;top:608.00px;font-size:11px;line-height:11px;color:#6d6f75;letter-spacing:-0.414px;">nov</div>
<div class="t " style="left:627.58px;top:621.00px;font-size:11px;line-height:11px;color:#6d6f75;letter-spacing:-0.357px;">15.</div>
<div class="t " style="left:668.43px;top:608.00px;font-size:11px;line-height:11px;color:#6d6f75;letter-spacing:-0.414px;">nov</div>
<div class="t " style="left:669.57px;top:621.00px;font-size:11px;line-height:11px;color:#6d6f75;letter-spacing:-0.357px;">16.</div>
<div class="t " style="left:710.42px;top:608.00px;font-size:11px;line-height:11px;color:#6d6f75;letter-spacing:-0.414px;">nov</div>
<div class="t " style="left:711.56px;top:621.00px;font-size:11px;line-height:11px;color:#6d6f75;letter-spacing:-0.357px;">17.</div>
<div class="t " style="left:752.41px;top:608.00px;font-size:11px;line-height:11px;color:#6d6f75;letter-spacing:-0.414px;">nov</div>
<div class="t " style="left:753.55px;top:621.00px;font-size:11px;line-height:11px;color:#6d6f75;letter-spacing:-0.357px;">18.</div>
<div class="t " style="left:794.40px;top:608.00px;font-size:11px;line-height:11px;color:#6d6f75;letter-spacing:-0.414px;">nov</div>
<div class="t " style="left:795.54px;top:621.00px;font-size:11px;line-height:11px;color:#6d6f75;letter-spacing:-0.357px;">19.</div>
<div class="t " style="left:836.39px;top:608.00px;font-size:11px;line-height:11px;color:#6d6f75;letter-spacing:-0.414px;">nov</div>
<div class="t " style="left:837.53px;top:621.00px;font-size:11px;line-height:11px;color:#6d6f75;letter-spacing:-0.357px;">20.</div>
<div class="t " style="left:878.38px;top:608.00px;font-size:11px;line-height:11px;color:#6d6f75;letter-spacing:-0.414px;">nov</div>
<div class="t " style="left:879.52px;top:621.00px;font-size:11px;line-height:11px;color:#6d6f75;letter-spacing:-0.357px;">21.</div>
<div class="t " style="left:920.37px;top:608.00px;font-size:11px;line-height:11px;color:#6d6f75;letter-spacing:-0.414px;">nov</div>
<div class="t " style="left:921.51px;top:621.00px;font-size:11px;line-height:11px;color:#6d6f75;letter-spacing:-0.357px;">22.</div>
<div class="t " style="left:962.36px;top:608.00px;font-size:11px;line-height:11px;color:#6d6f75;letter-spacing:-0.414px;">nov</div>
<div class="t " style="left:963.50px;top:621.00px;font-size:11px;line-height:11px;color:#6d6f75;letter-spacing:-0.357px;">23.</div>
<div class="t " style="left:1004.35px;top:608.00px;font-size:11px;line-height:11px;color:#6d6f75;letter-spacing:-0.414px;">nov</div>
<div class="t " style="left:1005.49px;top:621.00px;font-size:11px;line-height:11px;color:#6d6f75;letter-spacing:-0.357px;">24.</div>
<div class="t " style="left:1046.34px;top:608.00px;font-size:11px;line-height:11px;color:#6d6f75;letter-spacing:-0.414px;">nov</div>
<div class="t " style="left:1047.48px;top:621.00px;font-size:11px;line-height:11px;color:#6d6f75;letter-spacing:-0.357px;">25.</div>
<div class="t " style="left:1088.33px;top:608.00px;font-size:11px;line-height:11px;color:#6d6f75;letter-spacing:-0.414px;">nov</div>
<div class="t " style="left:1089.47px;top:621.00px;font-size:11px;line-height:11px;color:#6d6f75;letter-spacing:-0.357px;">26.</div>
<div class="t " style="left:1130.32px;top:608.00px;font-size:11px;line-height:11px;color:#6d6f75;letter-spacing:-0.414px;">nov</div>
<div class="t " style="left:1131.46px;top:621.00px;font-size:11px;line-height:11px;color:#6d6f75;letter-spacing:-0.357px;">27.</div>
<div class="t " style="left:1172.31px;top:608.00px;font-size:11px;line-height:11px;color:#6d6f75;letter-spacing:-0.414px;">nov</div>
<div class="t " style="left:1173.45px;top:621.00px;font-size:11px;line-height:11px;color:#6d6f75;letter-spacing:-0.357px;">28.</div>
<div class="t " style="left:1214.30px;top:608.00px;font-size:11px;line-height:11px;color:#6d6f75;letter-spacing:-0.414px;">nov</div>
<div class="t " style="left:1215.44px;top:621.00px;font-size:11px;line-height:11px;color:#6d6f75;letter-spacing:-0.357px;">29.</div>
<div class="t " style="left:1256.29px;top:608.00px;font-size:11px;line-height:11px;color:#6d6f75;letter-spacing:-0.414px;">nov</div>
<div class="t " style="left:1257.43px;top:621.00px;font-size:11px;line-height:11px;color:#6d6f75;letter-spacing:-0.357px;">30.</div>
<div class="t " style="left:1298.28px;top:608.00px;font-size:11px;line-height:11px;color:#6d6f75;letter-spacing:-0.414px;">des</div>
<div class="t " style="left:1302.26px;top:621.00px;font-size:11px;line-height:11px;color:#6d6f75;letter-spacing:-0.321px;">1.</div>
<div class="t " style="left:1340.27px;top:608.00px;font-size:11px;line-height:11px;color:#6d6f75;letter-spacing:-0.414px;">des</div>
<div class="t " style="left:1344.25px;top:621.00px;font-size:11px;line-height:11px;color:#6d6f75;letter-spacing:-0.321px;">2.</div>
<div class="t " style="left:1382.26px;top:608.00px;font-size:11px;line-height:11px;color:#6d6f75;letter-spacing:-0.414px;">des</div>
<div class="t " style="left:1386.24px;top:621.00px;font-size:11px;line-height:11px;color:#6d6f75;letter-spacing:-0.321px;">3.</div>
<div class="t " style="left:1424.25px;top:608.00px;font-size:11px;line-height:11px;color:#6d6f75;letter-spacing:-0.414px;">des</div>
<div class="t " style="left:1428.23px;top:621.00px;font-size:11px;line-height:11px;color:#6d6f75;letter-spacing:-0.321px;">4.</div>
<div class="t " style="left:1466.24px;top:608.00px;font-size:11px;line-height:11px;color:#6d6f75;letter-spacing:-0.414px;">des</div>
<div class="t " style="left:1470.22px;top:621.00px;font-size:11px;line-height:11px;color:#6d6f75;letter-spacing:-0.321px;">5.</div>
<div class="t " style="left:1508.23px;top:608.00px;font-size:11px;line-height:11px;color:#6d6f75;letter-spacing:-0.414px;">des</div>
<div class="t " style="left:1512.21px;top:621.00px;font-size:11px;line-height:11px;color:#6d6f75;letter-spacing:-0.321px;">6.</div>
<div class="t " style="left:1550.22px;top:608.00px;font-size:11px;line-height:11px;color:#6d6f75;letter-spacing:-0.414px;">des</div>
<div class="t " style="left:1554.20px;top:621.00px;font-size:11px;line-height:11px;color:#6d6f75;letter-spacing:-0.321px;">7.</div>
<div class="t " style="left:1592.21px;top:608.00px;font-size:11px;line-height:11px;color:#6d6f75;letter-spacing:-0.414px;">des</div>
<div class="t " style="left:1596.19px;top:621.00px;font-size:11px;line-height:11px;color:#6d6f75;letter-spacing:-0.321px;">8.</div>
<div class="t " style="right:1308.20px;top:358.00px;font-size:11px;line-height:11px;color:#6d6f75;letter-spacing:-0.12px;">16 120k</div>
<div class="t " style="right:1308.20px;top:403.00px;font-size:11px;line-height:11px;color:#6d6f75;letter-spacing:-0.12px;">16.1M</div>
<div class="t " style="right:1308.20px;top:449.00px;font-size:11px;line-height:11px;color:#6d6f75;letter-spacing:-0.12px;">16 080k</div>
<div class="t " style="right:1308.20px;top:495.00px;font-size:11px;line-height:11px;color:#6d6f75;letter-spacing:-0.12px;">16 060k</div>
<div class="t " style="right:1308.20px;top:540.00px;font-size:11px;line-height:11px;color:#6d6f75;letter-spacing:-0.12px;">16 040k</div>
<div class="t " style="right:1308.20px;top:586.00px;font-size:11px;line-height:11px;color:#6d6f75;letter-spacing:-0.12px;">16 020k</div>
<div style="position:absolute;left:878px;top:651px;width:14.2px;height:14.2px;border-radius:50%;background:#8b7ec4;"></div>
<div class="t " style="left:899.60px;top:653.00px;font-size:13px;line-height:13px;color:#06204c;letter-spacing:-0.274px;">Daglig endring</div>
<div style="position:absolute;left:1003px;top:651px;width:14.2px;height:14.2px;border-radius:50%;background:#55c9c2;"></div>
<div class="t " style="left:1024.40px;top:653.00px;font-size:13px;line-height:13px;color:#06204c;letter-spacing:-0.456px;">Følgere</div>
</body></html>
